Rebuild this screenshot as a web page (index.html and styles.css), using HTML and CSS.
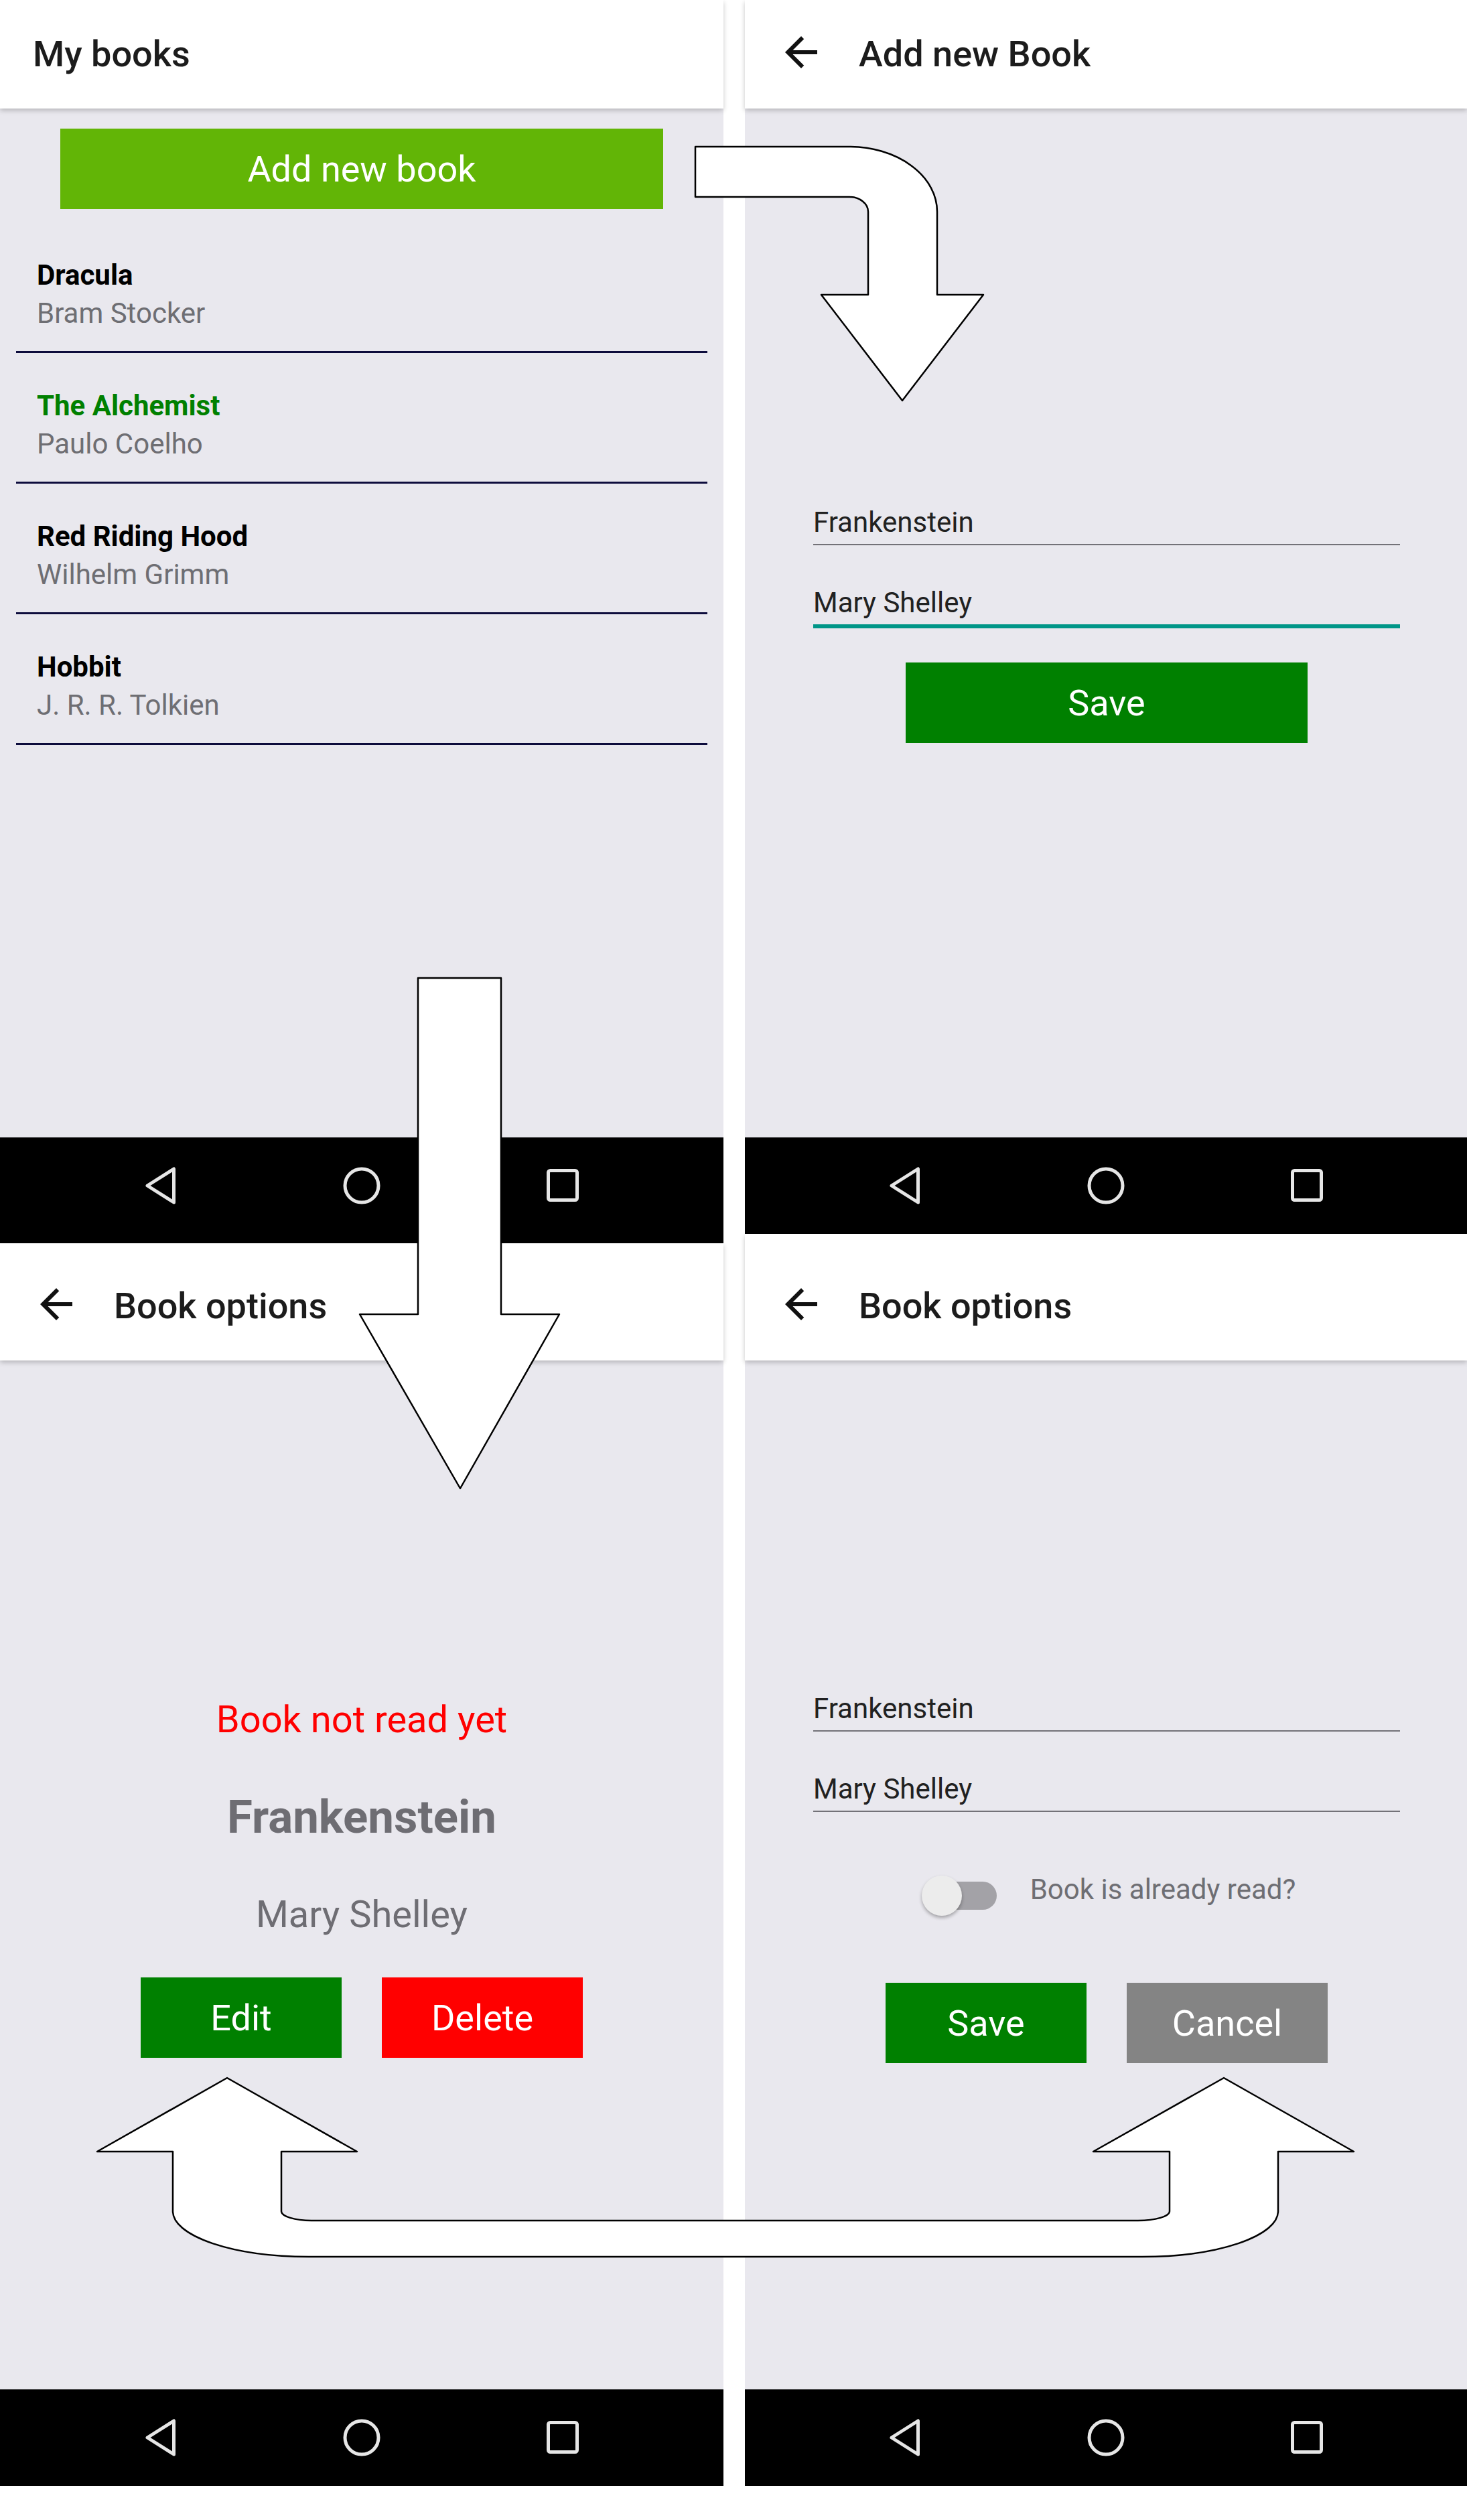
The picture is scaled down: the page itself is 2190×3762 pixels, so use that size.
FILE: index.html
```html
<!DOCTYPE html>
<html lang="en">
<head>
<meta charset="utf-8">
<title>Books app flow</title>
<link rel="stylesheet" href="styles.css">
</head>
<body>
<div class="page">
  <div class="col col-left">
    <section class="screen">
      <header class="appbar">
        <div class="bar"><h1 class="title title-plain">My books</h1></div>
      </header>
      <main class="content content-list">
        <div class="btn btn-add">Add new book</div>
        <ul class="books">
          <li class="book"><div class="book-title">Dracula</div><div class="book-author">Bram Stocker</div></li>
          <li class="book"><div class="book-title book-title-read">The Alchemist</div><div class="book-author">Paulo Coelho</div></li>
          <li class="book"><div class="book-title">Red Riding Hood</div><div class="book-author">Wilhelm Grimm</div></li>
          <li class="book"><div class="book-title">Hobbit</div><div class="book-author">J. R. R. Tolkien</div></li>
        </ul>
      </main>
      <nav class="navbar navbar-tall">
        <svg class="navicon" viewBox="0 0 100 100"><path d="M69.5 25 L69.5 75 L30 50 Z" class="nav-stroke"/></svg>
        <svg class="navicon" viewBox="0 0 100 100"><circle cx="50" cy="50" r="25" class="nav-stroke"/></svg>
        <svg class="navicon" viewBox="0 0 100 100"><rect x="28.5" y="27.5" width="43" height="44" rx="3" class="nav-stroke"/></svg>
      </nav>
    </section>

    <section class="screen">
      <header class="appbar appbar-s13">
        <div class="bar">
          <svg class="back" viewBox="4 4 16 16"><path d="M20 11H7.83l5.59-5.59L12 4l-8 8 8 8 1.41-1.41L7.83 13H20v-2z"/></svg>
          <h1 class="title">Book options</h1>
        </div>
      </header>
      <main class="content content-detail">
        <div class="status">Book not read yet</div>
        <div class="detail-title">Frankenstein</div>
        <div class="detail-author">Mary Shelley</div>
        <div class="btn-row btn-row-detail">
          <div class="btn btn-small btn-green">Edit</div>
          <div class="btn btn-small btn-red">Delete</div>
        </div>
      </main>
      <nav class="navbar">
        <svg class="navicon" viewBox="0 0 100 100"><path d="M69.5 25 L69.5 75 L30 50 Z" class="nav-stroke"/></svg>
        <svg class="navicon" viewBox="0 0 100 100"><circle cx="50" cy="50" r="25" class="nav-stroke"/></svg>
        <svg class="navicon" viewBox="0 0 100 100"><rect x="28.5" y="27.5" width="43" height="44" rx="3" class="nav-stroke"/></svg>
      </nav>
    </section>
  </div>

  <div class="col col-right">
    <section class="screen">
      <header class="appbar">
        <div class="bar">
          <svg class="back" viewBox="4 4 16 16"><path d="M20 11H7.83l5.59-5.59L12 4l-8 8 8 8 1.41-1.41L7.83 13H20v-2z"/></svg>
          <h1 class="title">Add new Book</h1>
        </div>
      </header>
      <main class="content content-form">
        <div class="field">Frankenstein</div>
        <div class="field field-focus">Mary Shelley</div>
        <div class="btn btn-green btn-save-wide">Save</div>
      </main>
      <nav class="navbar">
        <svg class="navicon" viewBox="0 0 100 100"><path d="M69.5 25 L69.5 75 L30 50 Z" class="nav-stroke"/></svg>
        <svg class="navicon" viewBox="0 0 100 100"><circle cx="50" cy="50" r="25" class="nav-stroke"/></svg>
        <svg class="navicon" viewBox="0 0 100 100"><rect x="28.5" y="27.5" width="43" height="44" rx="3" class="nav-stroke"/></svg>
      </nav>
    </section>

    <section class="screen">
      <header class="appbar appbar-s27">
        <div class="bar">
          <svg class="back" viewBox="4 4 16 16"><path d="M20 11H7.83l5.59-5.59L12 4l-8 8 8 8 1.41-1.41L7.83 13H20v-2z"/></svg>
          <h1 class="title">Book options</h1>
        </div>
      </header>
      <main class="content content-form content-edit">
        <div class="field">Frankenstein</div>
        <div class="field">Mary Shelley</div>
        <div class="switch-row">
          <div class="switch"><span class="track"></span><span class="thumb"></span></div>
          <span class="switch-label">Book is already read?</span>
        </div>
        <div class="btn-row btn-row-edit">
          <div class="btn btn-small btn-green">Save</div>
          <div class="btn btn-small btn-gray">Cancel</div>
        </div>
      </main>
      <nav class="navbar">
        <svg class="navicon" viewBox="0 0 100 100"><path d="M69.5 25 L69.5 75 L30 50 Z" class="nav-stroke"/></svg>
        <svg class="navicon" viewBox="0 0 100 100"><circle cx="50" cy="50" r="25" class="nav-stroke"/></svg>
        <svg class="navicon" viewBox="0 0 100 100"><rect x="28.5" y="27.5" width="43" height="44" rx="3" class="nav-stroke"/></svg>
      </nav>
    </section>
  </div>
</div>

<svg class="arrows" viewBox="0 0 2190 3762" width="2190" height="3762">
  <path class="flow" d="M1038 219 H1268 A131 97 0 0 1 1399 316 V440 H1468 L1347 598 L1226 440 H1296 V316 A28 22 0 0 0 1268 294 H1038 Z"/>
  <path class="flow" d="M624 1460 H748 V1962 H835 L687 2222 L537 1962 H624 Z"/>
  <path class="flow" d="M339 3102 L533 3212 H420 V3301 A45 14 0 0 0 465 3315 H1699 A47 14 0 0 0 1746 3301 V3212 H1632 L1827 3102 L2021 3212 H1908 V3301 A203 68 0 0 1 1705 3369 H461 A203 68 0 0 1 258 3301 V3212 H145 Z"/>
</svg>
</body>
</html>
```

FILE: styles.css
```css
* { box-sizing: border-box; margin: 0; padding: 0; }

html, body { background: #ffffff; }

body {
  position: relative;
  width: 2190px;
  height: 3762px;
  overflow: hidden;
  font-family: Roboto, "Noto Sans", "Liberation Sans", sans-serif;
}

.page {
  display: flex;
  align-items: flex-start;
  gap: 32px;
}

.col { display: flex; flex-direction: column; }
.col-left { width: 1080px; }
.col-right { width: 1078px; }

.screen { display: flex; flex-direction: column; }

/* app bar */
.appbar {
  position: relative;
  z-index: 1;
  background: #ffffff;
  box-shadow: 0 3px 7px rgba(0, 0, 0, 0.22);
}
.appbar-s13 { padding-top: 13px; }
.appbar-s27 { padding-top: 27px; }

.bar {
  height: 162px;
  display: flex;
  align-items: center;
}

.title {
  font-size: 54px;
  line-height: 64px;
  font-weight: 500;
  color: #1c1c1c;
}
.title-plain { margin-left: 49px; }

.back {
  width: 48px;
  height: 48px;
  margin-left: 60px;
  margin-right: 62px;
  margin-bottom: 6px;
  fill: #111111;
}

/* content */
.content {
  height: 1536px;
  background: #e9e8ee;
  display: flex;
  flex-direction: column;
}

/* buttons */
.btn {
  display: flex;
  align-items: center;
  justify-content: center;
  height: 120px;
  color: #ffffff;
  font-size: 54px;
  font-weight: 400;
}
.btn-add {
  width: 900px;
  margin: 30px auto 20px;
  background: #62b506;
}
.btn-green { background: #008000; }
.btn-red { background: #ff0000; }
.btn-gray { background: #848484; }
.btn-small { width: 300px; }
.btn-save-wide {
  width: 600px;
  align-self: center;
  margin-top: 51px;
}
.btn-row {
  display: flex;
  justify-content: center;
  gap: 60px;
}

/* book list */
.books {
  list-style: none;
  margin: 0 24px;
}
.book {
  padding: 50px 0 28px 31px;
  border-bottom: 3px solid #0d0c3c;
}
.book-title {
  font-size: 42px;
  line-height: 57px;
  font-weight: 700;
  color: #000000;
}
.book-title-read { color: #008000; }
.book-author {
  font-size: 42px;
  line-height: 57px;
  color: #6e6e73;
}

/* forms */
.content-form {
  justify-content: center;
  padding: 0 100px 0 102px;
}
.content-edit { padding-top: 4px; }

.field {
  font-size: 42px;
  line-height: 57px;
  color: #212121;
  padding-bottom: 4px;
  border-bottom: 2px solid #737278;
}
.field + .field { margin-top: 57px; }
.field-focus { border-bottom: 6px solid #009688; }

.switch-row {
  display: flex;
  justify-content: center;
  align-items: center;
  gap: 50px;
  height: 60px;
  margin-top: 95px;
  padding-left: 6px;
}
.switch {
  position: relative;
  width: 112px;
  height: 60px;
}
.track {
  position: absolute;
  left: 22px;
  right: 0;
  top: 9px;
  height: 42px;
  border-radius: 21px;
  background: #a3a2a7;
}
.thumb {
  position: absolute;
  left: 0;
  top: 0;
  width: 60px;
  height: 60px;
  border-radius: 50%;
  background: #ececec;
  box-shadow: 0 3px 5px rgba(0, 0, 0, 0.3);
}
.switch-label {
  font-size: 42px;
  line-height: 57px;
  color: #6e6e73;
  margin-bottom: 20px;
}
.btn-row-edit { margin-top: 100px; }

/* detail */
.content-detail {
  align-items: center;
  justify-content: center;
  padding-top: 9px;
}
.status {
  font-size: 56px;
  line-height: 64px;
  color: #ff0000;
}
.detail-title {
  font-size: 69px;
  line-height: 80px;
  font-weight: 700;
  color: #6e6d73;
  margin-top: 74px;
}
.detail-author {
  font-size: 56px;
  line-height: 66px;
  color: #6e6d73;
  margin-top: 72px;
}
.btn-row-detail { margin-top: 61px; }

/* nav bar */
.navbar {
  height: 144px;
  background: #000000;
  display: flex;
  justify-content: center;
  align-items: center;
  gap: 200px;
}
.navbar-tall {
  height: 158px;
  padding-bottom: 14px;
}
.navicon { width: 100px; height: 100px; }
.nav-stroke {
  fill: none;
  stroke: #e6e6e6;
  stroke-width: 5;
  stroke-linejoin: round;
}

/* flow arrows overlay */
.arrows {
  position: absolute;
  left: 0;
  top: 0;
  z-index: 5;
  pointer-events: none;
}
.flow {
  fill: #ffffff;
  stroke: #000000;
  stroke-width: 2.5;
  stroke-linejoin: round;
}
```
